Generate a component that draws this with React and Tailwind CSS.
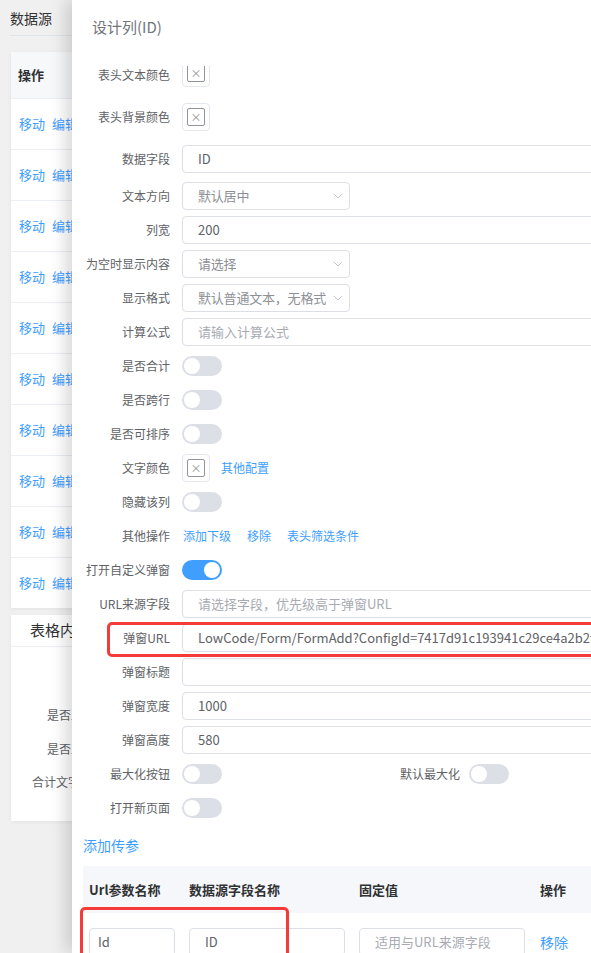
const font = { fontFamily: '"Noto Sans CJK SC", "Noto Sans", sans-serif' };

function Chevron() {
  return (
    <svg width="12" height="12" viewBox="0 0 12 12" className="shrink-0 text-[#c0c4cc]">
      <polyline points="2,4 6,8 10,4" fill="none" stroke="currentColor" strokeWidth="1" />
    </svg>
  );
}

function Toggle({ on }) {
  return (
    <div
      className={`w-10 h-5 rounded-full flex items-center px-[2px] ${
        on ? "bg-[#409eff] justify-end" : "bg-[#dcdfe6] justify-start"
      }`}
    >
      <div className="w-4 h-4 rounded-full bg-white" />
    </div>
  );
}

function ColorBox() {
  return (
    <div className="w-[28px] h-[28px] border border-[#e4e7ed] rounded-[4px] flex items-center justify-center bg-white">
      <div className="w-[18px] h-[18px] border border-[#909399] rounded-[2px] flex items-center justify-center text-[#909399] text-[11px] leading-none">
        ×
      </div>
    </div>
  );
}

function TextInput({ value, placeholder }) {
  return (
    <div className="flex-1 h-[28px] border border-[#dcdfe6] rounded-[4px] flex items-center px-[15px] text-[13px] whitespace-nowrap overflow-hidden bg-white">
      {value ? (
        <span className="text-[#606266]">{value}</span>
      ) : (
        <span className="text-[#a8abb2]">{placeholder}</span>
      )}
    </div>
  );
}

function Select({ text }) {
  return (
    <div className="w-[168px] h-[28px] border border-[#dcdfe6] rounded-[4px] flex items-center justify-between gap-[2px] pl-[15px] pr-[5px] text-[13px] text-[#8d9095] whitespace-nowrap">
      <span className="overflow-hidden tracking-[-0.2px]">{text}</span>
      <Chevron />
    </div>
  );
}

function Label({ children }) {
  return (
    <div className="w-[100px] shrink-0 pr-[12px] text-right text-[12px] text-[#606266] whitespace-nowrap">{children}</div>
  );
}

function Row({ label, h = "h-[34px]", children, extra }) {
  return (
    <div className={`relative flex items-center ${h}`}>
      <Label>{label}</Label>
      <div className="flex-1 flex items-center gap-[11px]">{children}</div>
      {extra}
    </div>
  );
}

const sideRows = Array.from({ length: 10 });

export default function App() {
  return (
    <div className="relative w-[591px] h-[953px] overflow-hidden bg-[#f0f0f0]" style={font}>
      {/* page behind the drawer */}
      <div className="pl-[10px] pt-[8px]">
        <div className="h-[20px] leading-[20px] text-[14px] text-[#303133]">数据源</div>
        <div className="mt-[7px] h-px w-[120px] bg-[#dfe3ea]" />

        <div className="mt-[16px] ml-px w-[220px] bg-white shadow-[0_1px_4px_rgba(0,0,0,0.06)]">
          <div className="h-[46px] flex items-center pl-[7px] bg-[#f7f8fa] text-[13px] font-bold text-[#303133]">
            操作
          </div>
          {sideRows.map((_, i) => (
            <div
              key={i}
              className="h-[51px] border-t border-[#ebeef5] flex items-center pl-[8px] gap-[7px] text-[13px] text-[#409eff]"
            >
              <span>移动</span>
              <span>编辑</span>
            </div>
          ))}
        </div>

        <div className="mt-[7px] ml-px w-[220px] bg-white shadow-[0_1px_4px_rgba(0,0,0,0.06)]">
          <div className="h-[32px] flex items-center pl-[19px] border-b border-[#ebeef5] text-[15px] text-[#303133]">
            表格内容设置
          </div>
          <div className="pt-[51px] pb-[22px] text-[12px] text-[#606266]">
            <div className="h-[34px] flex items-center pl-[36px]">是否显示合计</div>
            <div className="h-[33px] flex items-center pl-[36px]">是否显示序号</div>
            <div className="h-[34px] flex items-center pl-[21px]">合计文字显示</div>
          </div>
        </div>
      </div>

      {/* column design drawer */}
      <div className="absolute top-0 left-[72px] h-full w-[560px] bg-white shadow-[-6px_0_16px_rgba(0,0,0,0.16)]">
        <div className="h-[54px] flex items-center pl-[20px] text-[15px] text-[#72767b]">设计列(ID)</div>

        <div className="pl-[10px]">
          <div className="relative flex h-[42px]">
            <div className="self-center">
              <Label>表头文本颜色</Label>
            </div>
            <div className="self-end mb-[9px] h-[21px] overflow-hidden flex items-end">
              <ColorBox />
            </div>
          </div>
          <Row label="表头背景颜色" h="h-[42px]">
            <ColorBox />
          </Row>
          <Row label="数据字段" h="h-[41px]">
            <TextInput value="ID" />
          </Row>
          <Row label="文本方向">
            <Select text="默认居中" />
          </Row>
          <Row label="列宽">
            <TextInput value="200" />
          </Row>
          <Row label="为空时显示内容">
            <Select text="请选择" />
          </Row>
          <Row label="显示格式">
            <Select text="默认普通文本，无格式" />
          </Row>
          <Row label="计算公式">
            <TextInput placeholder="请输入计算公式" />
          </Row>
          <Row label="是否合计">
            <Toggle />
          </Row>
          <Row label="是否跨行">
            <Toggle />
          </Row>
          <Row label="是否可排序">
            <Toggle />
          </Row>
          <Row label="文字颜色">
            <ColorBox />
            <span className="text-[12px] text-[#409eff]">其他配置</span>
          </Row>
          <Row label="隐藏该列">
            <Toggle />
          </Row>
          <Row label="其他操作">
            <div className="flex items-center gap-[16px] text-[12px] text-[#409eff] pl-px">
              <span>添加下级</span>
              <span>移除</span>
              <span>表头筛选条件</span>
            </div>
          </Row>
          <Row label="打开自定义弹窗">
            <Toggle on />
          </Row>
          <Row label="URL来源字段">
            <TextInput placeholder="请选择字段，优先级高于弹窗URL" />
          </Row>
          <Row
            label="弹窗URL"
            extra={
              <div className="absolute top-[1px] left-[25px] -right-[10px] h-[35px] border-[3px] border-[#f53a3a] rounded-[5px]" />
            }
          >
            <TextInput value="LowCode/Form/FormAdd?ConfigId=7417d91c193941c29ce4a2b2f0a8" />
          </Row>
          <Row label="弹窗标题">
            <TextInput />
          </Row>
          <Row label="弹窗宽度">
            <TextInput value="1000" />
          </Row>
          <Row label="弹窗高度">
            <TextInput value="580" />
          </Row>
          <div className="flex items-center h-[34px]">
            <div className="w-[290px] flex items-center">
              <Label>最大化按钮</Label>
              <Toggle />
            </div>
            <div className="w-[97px] pr-[9px] text-right text-[12px] text-[#606266]">默认最大化</div>
            <Toggle />
          </div>
          <Row label="打开新页面">
            <Toggle />
          </Row>
        </div>

        <div className="mt-[10px] ml-[11px] h-[20px] leading-[20px] text-[14px] text-[#409eff]">添加传参</div>

        <div className="relative mt-[11px] ml-[11px]">
          <div className="h-[47px] flex items-center bg-[#f5f7fa] text-[13px] font-bold text-[#303133]">
            <div className="w-[100px] pl-[6px]">Url参数名称</div>
            <div className="w-[170px] pl-[6px]">数据源字段名称</div>
            <div className="w-[181px] pl-[6px]">固定值</div>
            <div className="pl-[6px]">操作</div>
          </div>
          <div className="flex items-center pt-[15px] text-[13px]">
            <div className="w-[100px] pl-[6px]">
              <div className="w-[86px] h-[28px] border border-[#dcdfe6] rounded-[4px] flex items-center pl-[8px] text-[#606266]">Id</div>
            </div>
            <div className="w-[170px] pl-[6px]">
              <div className="w-[156px] h-[28px] border border-[#dcdfe6] rounded-[4px] flex items-center pl-[15px] text-[#606266]">ID</div>
            </div>
            <div className="w-[181px] pl-[6px]">
              <div className="w-[166px] h-[28px] border border-[#dcdfe6] rounded-[4px] flex items-center pl-[15px] text-[#a8abb2] whitespace-nowrap">适用与URL来源字段</div>
            </div>
            <div className="pl-[6px] text-[14px] text-[#409eff]">移除</div>
          </div>
          <div className="absolute top-[41px] -left-[3px] w-[209px] h-[60px] border-[3px] border-[#f53a3a] rounded-[5px]" />
        </div>
      </div>
    </div>
  );
}
